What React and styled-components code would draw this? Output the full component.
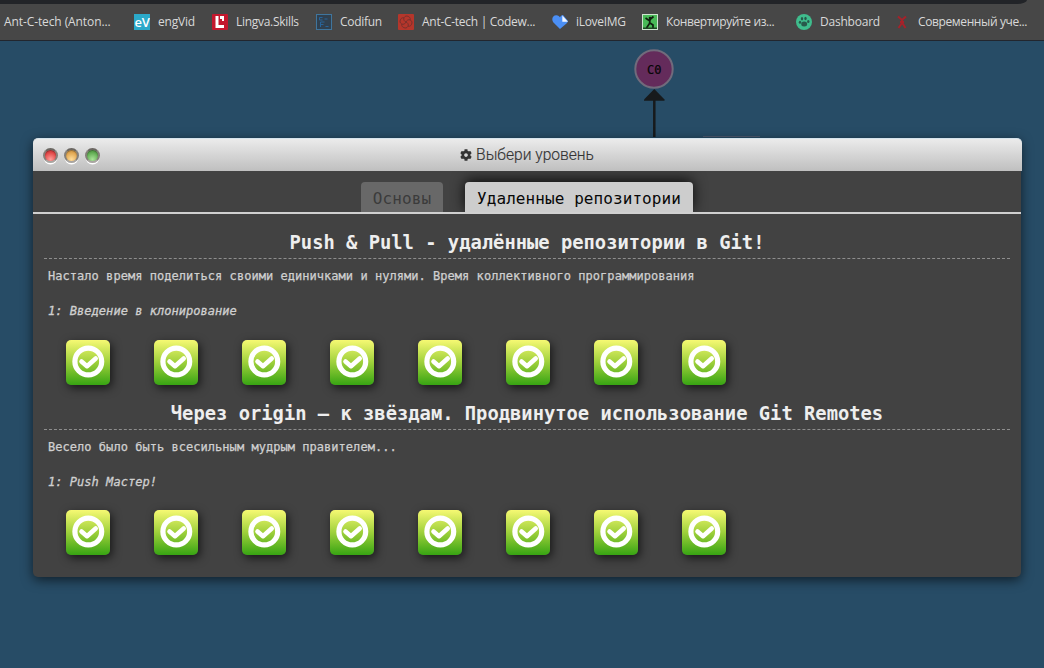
import React from "react";
import styled, { createGlobalStyle } from "styled-components";
import { FaCog } from "react-icons/fa";

const GlobalStyle = createGlobalStyle`
  * { box-sizing: border-box; }
  body { margin: 0; background: #274c66; overflow: hidden; }
`;

const mono = `"DejaVu Sans Mono", "Liberation Mono", monospace`;

const Page = styled.div`
  position: relative;
  width: 1044px;
  height: 668px;
  display: flex;
  flex-direction: column;
  background: #274c66;
  overflow: hidden;
`;

const AddressStrip = styled.div`
  height: 4px;
  background: #474747;
  flex: none;
`;

const AddressField = styled.div`
  width: 1027px;
  height: 4px;
  background: #222428;
  border-bottom-right-radius: 10px 4px;
`;

const BookmarksBar = styled.nav`
  flex: none;
  height: 37px;
  padding-left: 4px;
  display: grid;
  grid-template-columns: 130px 78px 104px 82px 154px 90px 154px 98px 140px;
  align-items: center;
  background: #474747;
  border-bottom: 1px solid #22262e;
`;

const Bookmark = styled.a`
  display: flex;
  align-items: center;
  gap: 8px;
  height: 36px;
  white-space: nowrap;
  color: #d9d9d9;
  font: 12px/16px "Open Sans", "Noto Sans", sans-serif;
  letter-spacing: ${(p) => p.$spacing}px;

  svg { flex: none; }
`;

const Canvas = styled.main`
  flex: 1;
  display: flex;
  justify-content: flex-start;
  align-items: flex-start;
  padding: 97px 22px 0 33px;
`;

const CommitTree = styled.svg`
  position: absolute;
  left: 620px;
  top: 41px;
`;

const Window = styled.section`
  position: relative;
  width: 988px;
  height: 439px;
  border-radius: 5px;
  background: #424242;
  box-shadow: 0 3px 12px rgba(0, 0, 0, 0.6);
`;

const TitleBar = styled.header`
  position: relative;
  z-index: 1;
  height: 33px;
  margin-right: -1px;
  padding-left: 10px;
  display: grid;
  grid-template-columns: 62px 1fr 73px;
  align-items: center;
  border-radius: 5px 5px 0 0;
  border-top: 1px solid #d5e3ec;
  background: linear-gradient(#ebebeb, #bfbfbf);
`;

const Lights = styled.div`
  display: flex;
  gap: 6px;
`;

const Light = styled.span`
  width: 15px;
  height: 15px;
  border-radius: 50%;
  border: 2px solid #85807a;
  border-top-color: #6b6762;
  border-bottom-color: #a9a5a1;
  background: radial-gradient(circle at 50% 85%, ${(p) => p.$glow}, ${(p) => p.$color} 65%);
  box-shadow: 0 2px 0 -0.5px #fff, inset 0 1px 1px rgba(0, 0, 0, 0.35);
`;

const Title = styled.h1`
  margin: 0;
  display: flex;
  justify-content: center;
  align-items: center;
  gap: 4px;
  color: #333;
  font: 300 15.6px/20px Roboto, sans-serif;
  -webkit-text-stroke: 0.15px #333;
`;

const Tabs = styled.div`
  height: 43px;
  padding-top: 11px;
  display: flex;
  justify-content: center;
  gap: 22px;
  border-bottom: 2px solid #d0d0d0;
`;

const Tab = styled.button`
  width: ${(p) => p.$width}px;
  height: 30px;
  padding: 3px 0 0;
  border: 0;
  border-radius: 4px 4px 0 0;
  background: ${(p) => (p.$active ? "#cdcdcd" : "#686868")};
  color: ${(p) => (p.$active ? "#080808" : "#3b3b3b")};
  font: 16px/27px ${mono};
  letter-spacing: 0.08px;
  white-space: nowrap;
  box-shadow: ${(p) => (p.$active ? "0 -2px 14px rgba(0,0,0,.85)" : "none")};
  clip-path: inset(-20px -20px 0 -20px);
`;

const Sequence = styled.section`
  height: 170.5px;
  padding: 0 11px;
  display: flex;
  flex-direction: column;
`;

const Heading = styled.h2`
  flex: none;
  height: 45px;
  margin: 0;
  padding-top: 15px;
  border-bottom: 1px dashed #8e8e8e;
  text-align: center;
  color: #eee;
  font: 700 18.8px/27px ${mono};
  white-space: nowrap;
`;

const About = styled.p`
  margin: 9px 4px 0;
  color: #d0d0d0;
  font: 12px/17px ${mono};
  letter-spacing: 0.04px;
  -webkit-text-stroke: 0.25px #d0d0d0;
`;

const Series = styled.p`
  margin: 18.4px 4px 0;
  color: #d0d0d0;
  font: italic 12px/17px ${mono};
  letter-spacing: 0.04px;
  -webkit-text-stroke: 0.3px #d0d0d0;
`;

const Levels = styled.div`
  display: flex;
  gap: 44px;
  margin: 19.5px 0 0 22px;
`;

const Level = styled.button`
  width: 44px;
  height: 45px;
  padding: 0;
  border: 0;
  border-radius: 5px;
  display: flex;
  justify-content: center;
  align-items: flex-start;
  background: linear-gradient(#f6f973, #9ed03b 50%, #37a413);
  box-shadow: 2px 3px 10px rgba(0, 0, 0, 0.65);
`;

const bookmarks = [
  { label: "Ant-C-tech (Anton...", spacing: -0.1 },
  {
    label: "engVid",
    spacing: -0.22,
    icon: (
      <>
        <rect width="16" height="16" fill="#2ba9c9" />
        <text x="8" y="12.5" textAnchor="middle" fontFamily="Open Sans, sans-serif" fontWeight="600" fontSize="13" letterSpacing="-.3" fill="#fff">eV</text>
      </>
    ),
  },
  {
    label: "Lingva.Skills",
    spacing: -0.3,
    icon: (
      <>
        <rect width="16" height="16" rx="1" fill="#c3172d" />
        <path d="M3.5 2h3v9H12v3H3.5zM8 2h4v5h-2V5H8z" fill="#fff" />
      </>
    ),
  },
  {
    label: "Codifun",
    spacing: -0.3,
    icon: (
      <>
        <rect x=".5" y=".5" width="15" height="15" fill="#30404f" stroke="#3f759d" />
        <path d="M6.500 3.500h-3v2.500h3M8.500 5h3M4.500 13V8h4M4.500 10.500h3M9.500 12.500h3" fill="none" stroke="#28649a" />
      </>
    ),
  },
  {
    label: "Ant-C-tech | Codew...",
    spacing: -0.28,
    icon: (
      <>
        <rect width="16" height="16" rx="1" fill="#b5362b" />
        <path d="M8 8C5 7 5 3 8 2c3 0 5 2 4 4M8 8c1-3 5-3 6 0 0 3-2 5-4 4M8 8c3 1 3 5 0 6-3 0-5-2-4-4M8 8c-1 3-5 3-6 0 0-3 2-5 4-4" fill="none" stroke="#78302b" strokeWidth="1" />
      </>
    ),
  },
  {
    label: "iLoveIMG",
    spacing: -0.3,
    icon: (
      <>
        <path d="M8 15 1.2 8.2C-1 5 1 1 4.4 1.2 6.200 1.200 7.500 2.500 8 3.300 8.600 2.200 9.500 1.300 11 1l5 6c-.5 1.500-1 2-1.800 2.700z" fill="#4b8ff5" />
        <path d="M10.300 1.500v6.200H16z" fill="#f1f6ff" />
      </>
    ),
  },
  {
    label: "Конвертируйте из...",
    spacing: -0.39,
    icon: (
      <>
        <rect x=".5" y=".5" width="15" height="15" fill="#48b957" stroke="#cce5ce" />
        <path d="m3.500 4 3.500 2.500 4.500-4M8 6l-.5 3.500L4.500 14M8 9l3 2v3" fill="none" stroke="#10200f" strokeWidth="1.700" />
        <circle cx="8" cy="4" r="1.300" fill="#10200f" />
        <path d="M1 13.500h14V15H1z" fill="#1b4821" />
      </>
    ),
  },
  {
    label: "Dashboard",
    spacing: -0.22,
    icon: (
      <>
        <circle cx="8" cy="8" r="8" fill="#3fbd8d" />
        <g fill="#28594b">
          <ellipse cx="8.200" cy="10" rx="3" ry="2.500" />
          <ellipse cx="4" cy="8.300" rx="1.200" ry="1.500" />
          <ellipse cx="6" cy="4.700" rx="1.200" ry="1.700" />
          <ellipse cx="9.500" cy="4.500" rx="1.200" ry="1.700" />
          <ellipse cx="12.300" cy="7.500" rx="1.200" ry="1.600" />
        </g>
      </>
    ),
  },
  {
    label: "Современный уче...",
    spacing: -0.38,
    icon: (
      <path d="M4 2.500 8 6l4-3.500M8 5v4l-3.500 5M8 8.500l3.500 5.500M6 8h4" fill="none" stroke="#a5222a" strokeWidth="2" />
    ),
  },
];

const sequences = [
  {
    title: "Push & Pull - удалённые репозитории в Git!",
    about: "Настало время поделиться своими единичками и нулями. Время коллективного программирования",
    series: "1: Введение в клонирование",
  },
  {
    title: "Через origin – к звёздам. Продвинутое использование Git Remotes",
    about: "Весело было быть всесильным мудрым правителем...",
    series: "1: Push Мастер!",
  },
];

function SolvedIcon() {
  return (
    <svg width="44" height="44" viewBox="0 0 44 44" fill="none" stroke="#fff">
      <circle cx="22.300" cy="21.500" r="13.400" strokeWidth="5.200" />
      <path d="m15.500 21.400 5.500 4.800 8.700-7.700" strokeWidth="4.600" strokeLinejoin="round" strokeLinecap="round" />
    </svg>
  );
}

export default function App() {
  return (
    <Page>
      <GlobalStyle />
      <AddressStrip>
        <AddressField />
      </AddressStrip>
      <BookmarksBar>
        {bookmarks.map((b) => (
          <Bookmark key={b.label} $spacing={b.spacing}>
            {b.icon && <svg width="16" height="16" viewBox="0 0 16 16">{b.icon}</svg>}
            {b.label}
          </Bookmark>
        ))}
      </BookmarksBar>
      <CommitTree width="160" height="98">
        <path d="M34.300 96V56" stroke="#171a1c" strokeWidth="2.500" />
        <path d="M34.300 48 44.500 58.500v1.200h-20.500v-1.200z" fill="#171a1c" />
        <circle cx="34" cy="28" r="18.700" fill="#642b5b" stroke="#716b7c" strokeWidth="2" />
        <text x="34.300" y="33" textAnchor="middle" fontFamily="DejaVu Sans Mono, monospace" fontSize="12" fill="#050505" stroke="#050505" strokeWidth=".2">C0</text>
        <path d="M83 95.500h57" stroke="#4c5a70" strokeWidth="1" />
      </CommitTree>
      <Canvas>
        <Window>
          <TitleBar>
            <Lights>
              <Light $color="#e04444" $glow="#ff9d98" />
              <Light $color="#dfa44e" $glow="#ffdc98" />
              <Light $color="#5eaa50" $glow="#a9e398" />
            </Lights>
            <Title>
              <FaCog size={12} />
              Выбери уровень
            </Title>
          </TitleBar>
          <Tabs>
            <Tab $width={82}>Основы</Tab>
            <Tab $width={228} $active>Удаленные репозитории</Tab>
          </Tabs>
          {sequences.map((s) => (
            <Sequence key={s.title}>
              <Heading>{s.title}</Heading>
              <About>{s.about}</About>
              <Series>{s.series}</Series>
              <Levels>
                {Array.from({ length: 8 }, (_, i) => (
                  <Level key={i}>
                    <SolvedIcon />
                  </Level>
                ))}
              </Levels>
            </Sequence>
          ))}
        </Window>
      </Canvas>
    </Page>
  );
}
